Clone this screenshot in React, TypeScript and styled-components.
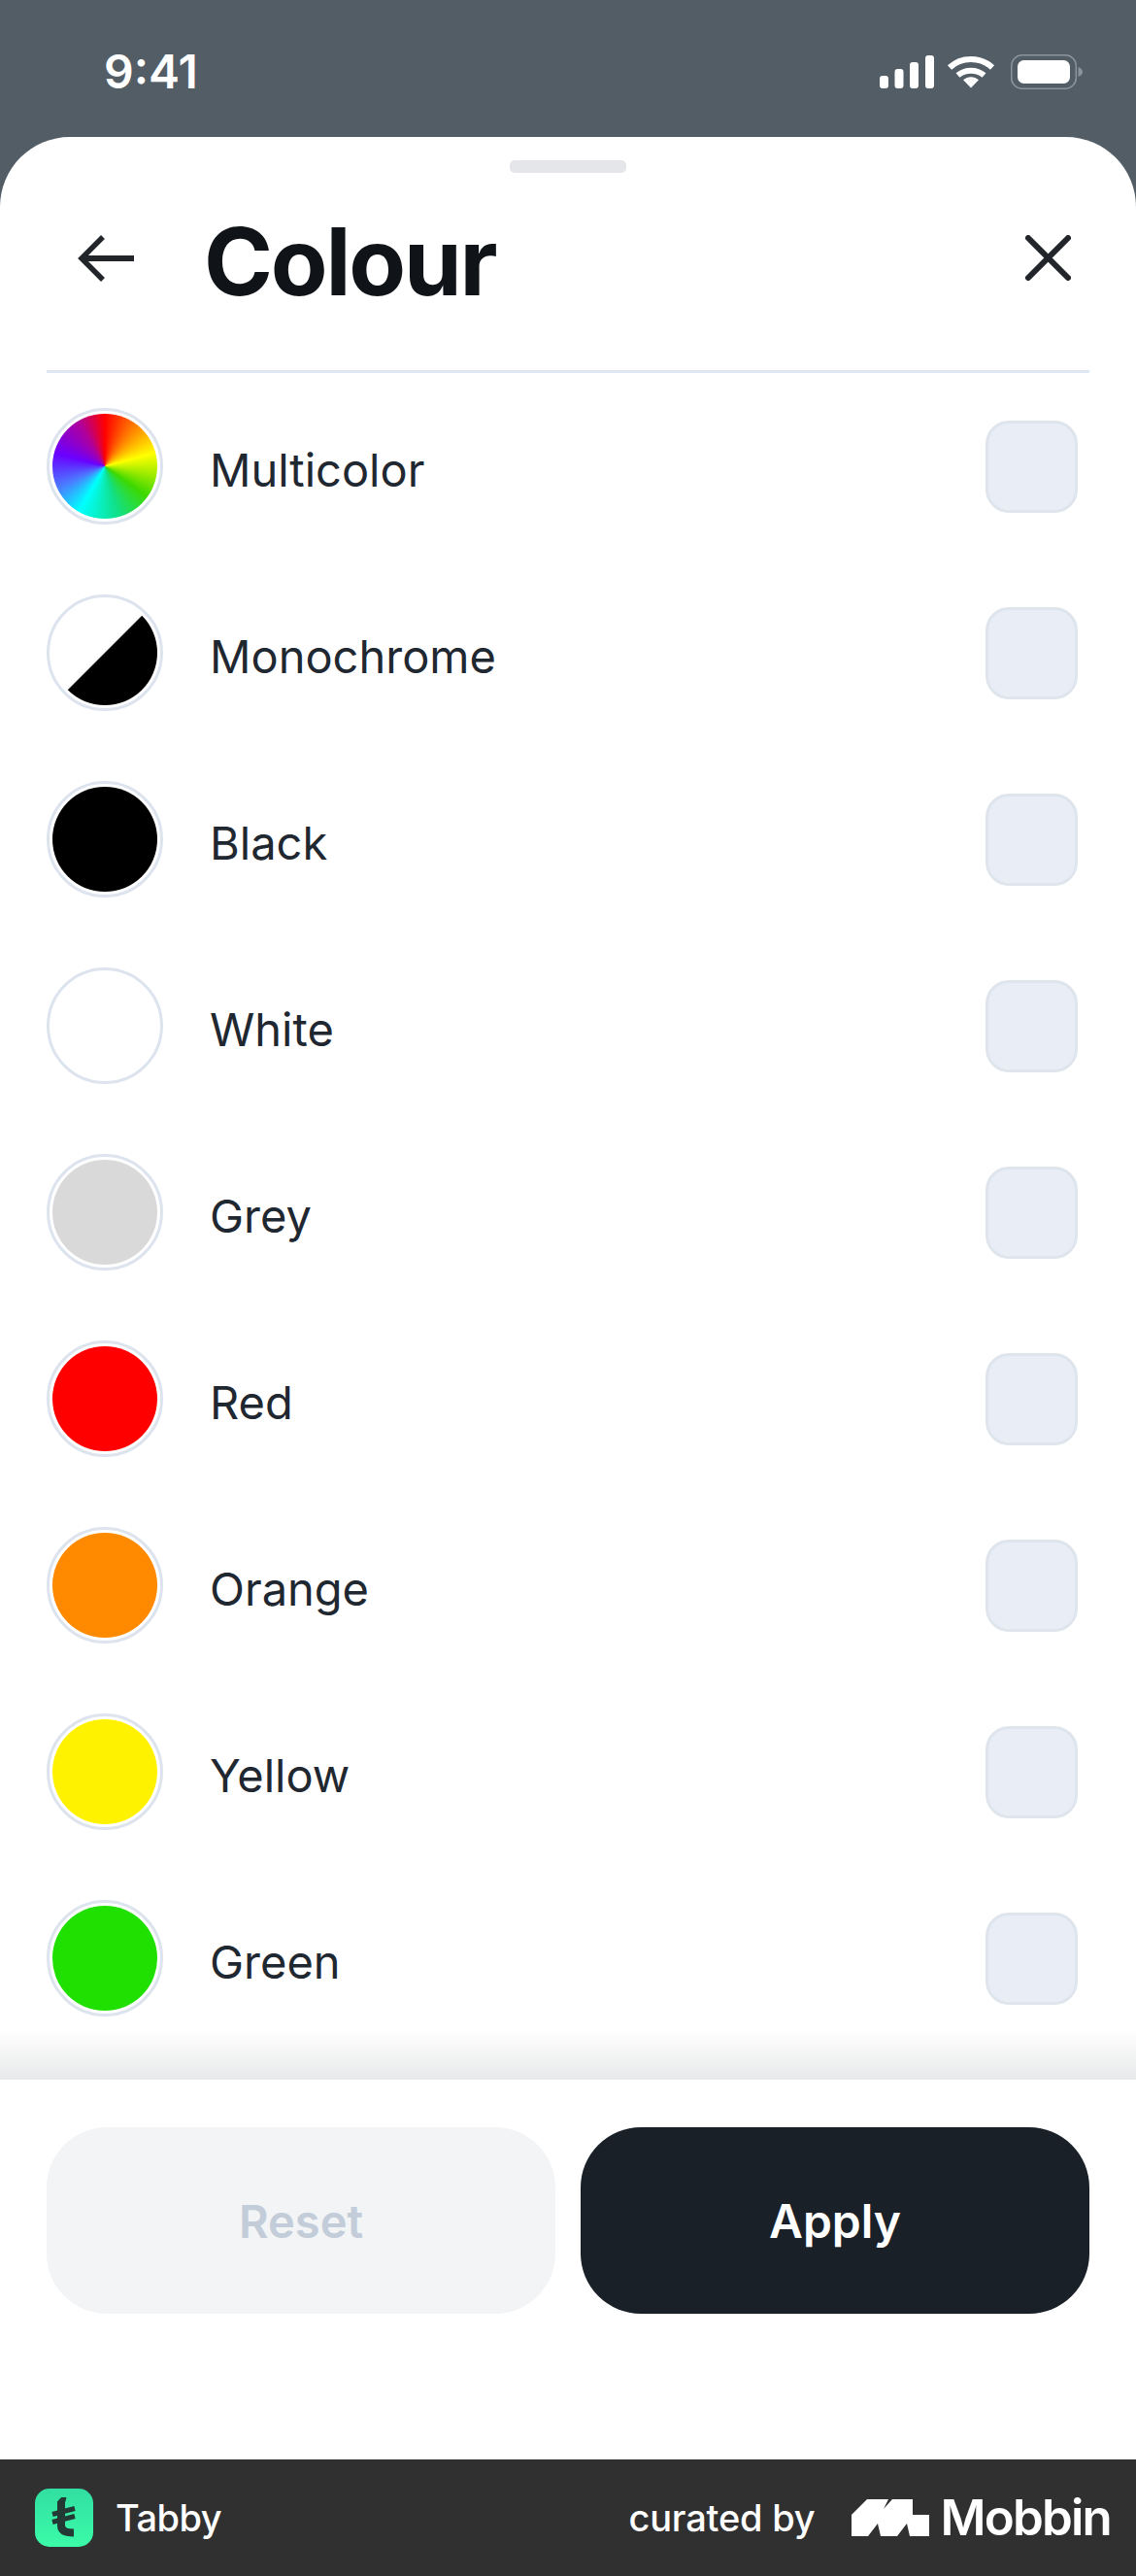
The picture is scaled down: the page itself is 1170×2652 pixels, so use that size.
import React from 'react';
import styled, { createGlobalStyle } from 'styled-components';

type ColourItem = { name: string; fill: string; plain?: boolean };

const colours: ColourItem[] = [
  {
    name: 'Multicolor',
    fill: 'conic-gradient(#ff0000 0deg, #ff7a00 35deg, #ffff00 75deg, #3ed800 125deg, #10e08a 165deg, #00ffff 210deg, #4a7dff 245deg, #6a00ff 285deg, #b0009a 330deg, #ff0000 360deg)',
  },
  { name: 'Monochrome', fill: 'linear-gradient(135deg, #ffffff 49.5%, #000000 50.5%)' },
  { name: 'Black', fill: '#000000' },
  { name: 'White', fill: '#ffffff', plain: true },
  { name: 'Grey', fill: '#d9d9d9' },
  { name: 'Red', fill: '#ff0000' },
  { name: 'Orange', fill: '#ff8a00' },
  { name: 'Yellow', fill: '#fff200' },
  { name: 'Green', fill: '#1fe000' },
];

export default function App() {
  return (
    <Page>
      <GlobalStyle />
      <StatusBar>
        <Time>9:41</Time>
        <StatusIcons>
          <svg width="56" height="34" viewBox="0 0 56 34" fill="#fff">
            <rect x="0" y="21" width="9" height="13" rx="3" />
            <rect x="15.5" y="14" width="9" height="20" rx="3" />
            <rect x="31" y="7" width="9" height="27" rx="3" />
            <rect x="47" y="0" width="9" height="34" rx="3" />
          </svg>
          <svg width="50" height="34" viewBox="0 0 50 34" fill="none" stroke="#fff" strokeWidth="6">
            <path d="M3 12.5C15 1 35 1 47 12.5" />
            <path d="M11.5 20.5C19 14 31 14 38.5 20.5" />
            <path d="M17 25.2L25 33.5L33 25.2C28 21.2 22 21.2 17 25.2Z" fill="#fff" stroke="none" />
          </svg>
          <svg width="74" height="36" viewBox="0 0 74 36" fill="none">
            <rect x="0.75" y="0.75" width="66.5" height="34.5" rx="11" stroke="#8b949c" strokeWidth="1.5" />
            <rect x="7" y="6" width="54" height="24" rx="6.5" fill="#fff" />
            <path d="M69.5 13C72.5 14 74 16 74 18C74 20 72.5 22 69.5 23Z" fill="#8b949c" />
          </svg>
        </StatusIcons>
      </StatusBar>

      <Sheet>
        <Handle />
        <Header>
          <BackIcon width="58" height="50" viewBox="0 0 58 50" fill="none" stroke="#22252a">
            <path d="M58 25H4" strokeWidth="6" />
            <path d="M26 3L4 25L26 47" strokeWidth="5.5" />
          </BackIcon>
          <Title>Colour</Title>
          <CloseIcon width="47" height="47" viewBox="0 0 47 47" fill="none" stroke="#22252a" strokeWidth="6" strokeLinecap="round">
            <path d="M3 3L44 44" />
            <path d="M44 3L3 44" />
          </CloseIcon>
        </Header>
        <Divider />

        <ListArea>
          {colours.map((colour) => (
            <Row key={colour.name}>
              <Swatch $fill={colour.fill} $plain={colour.plain} />
              <Label>{colour.name}</Label>
              <Checkbox />
            </Row>
          ))}
          <Shade />
        </ListArea>

        <Actions>
          <ResetButton>Reset</ResetButton>
          <ApplyButton>Apply</ApplyButton>
        </Actions>
      </Sheet>

      <CreditBar>
        <AppBrand>
          <svg width="60" height="60" viewBox="0 0 60 60">
            <defs>
              <linearGradient id="tabbyGreen" x1="0" y1="0" x2="0" y2="1">
                <stop offset="0" stopColor="#31dfa2" />
                <stop offset="1" stopColor="#3bfba8" />
              </linearGradient>
            </defs>
            <rect width="60" height="60" rx="15" fill="url(#tabbyGreen)" />
            <g fill="none" stroke="#223a33">
              <path d="M27 13V38C27 43 31 45.5 40 45.5" strokeWidth="8" />
              <path d="M23 14L27 9.5H32L30 16Z" fill="#223a33" strokeWidth="1" />
              <path d="M18 26.5L41 20.5" strokeWidth="5" />
              <path d="M18 34.5L41 28.5" strokeWidth="5" />
            </g>
          </svg>
          <AppName>Tabby</AppName>
        </AppBrand>
        <Curated>
          <CuratedText>curated by</CuratedText>
          <svg width="80" height="38" viewBox="0 0 80 38" fill="#fff">
            <path d="M0 16L16 0H38L33 10L42 0H63V16H80V38H60L57 25L47 38H30L27 25L17 38H0Z" />
          </svg>
          <MobbinName>Mobbin</MobbinName>
        </Curated>
      </CreditBar>
    </Page>
  );
}

const GlobalStyle = createGlobalStyle`
  html, body {
    margin: 0;
    padding: 0;
    background: #ffffff;
  }

  * {
    box-sizing: border-box;
  }
`;

const Page = styled.div`
  width: 1170px;
  height: 2652px;
  display: flex;
  flex-direction: column;
  background: #535d66;
  font-family: Inter, 'Liberation Sans', sans-serif;
  overflow: hidden;
`;

const StatusBar = styled.div`
  height: 141px;
  flex: none;
  display: flex;
  justify-content: space-between;
  align-items: flex-start;
  padding: 56px 55px 0 107px;
`;

const Time = styled.div`
  font-size: 48px;
  line-height: 36px;
  font-weight: 600;
  color: #ffffff;
`;

const StatusIcons = styled.div`
  display: flex;
  align-items: center;
  gap: 13px;

  svg + svg + svg {
    margin-left: 3px;
  }
`;

const Sheet = styled.div`
  flex: 1;
  min-height: 0;
  display: flex;
  flex-direction: column;
  background: #ffffff;
  border-radius: 72px 72px 0 0;
`;

const Handle = styled.div`
  width: 120px;
  height: 13px;
  margin: 24px auto 0;
  flex: none;
  border-radius: 5px;
  background: #e5e6e9;
`;

const Header = styled.div`
  height: 203px;
  flex: none;
  display: flex;
  align-items: center;
  padding: 0 67px 21px 80px;
`;

const BackIcon = styled.svg`
  flex: none;
  margin-top: -7px;
`;

const CloseIcon = styled.svg`
  flex: none;
  margin-top: -8px;
`;

const Title = styled.h1`
  flex: 1;
  margin: 0 0 0 72px;
  font-size: 96px;
  line-height: 110px;
  font-weight: 700;
  letter-spacing: -2.2px;
  color: #101318;
`;

const Divider = styled.div`
  height: 3px;
  flex: none;
  margin: 0 48px;
  background: #dfe7f0;
`;

const ListArea = styled.div`
  flex: 1;
  min-height: 0;
  position: relative;
  overflow: hidden;
`;

const Row = styled.div`
  height: 192px;
  display: flex;
  align-items: center;
  padding: 0 60px 0 48px;
`;

const Swatch = styled.div<{ $fill: string; $plain?: boolean }>`
  width: 120px;
  height: 120px;
  flex: none;
  padding: 3px;
  border: 3px solid #dee4ed;
  border-radius: 50%;
  background: ${(p) => p.$fill};
  background-clip: content-box;
  background-origin: content-box;
`;

const Label = styled.div`
  flex: 1;
  margin: 8px 0 0 48px;
  font-size: 47px;
  line-height: 60px;
  color: #1f2730;
`;

const Checkbox = styled.div`
  width: 95px;
  height: 95px;
  flex: none;
  border: 3px solid #dfe5ed;
  border-radius: 24px;
  background: #e9eef6;
`;

const Shade = styled.div`
  position: absolute;
  left: 0;
  right: 0;
  bottom: 0;
  height: 52px;
  background: linear-gradient(to bottom, rgba(232, 233, 234, 0), #e8e9ea);
`;

const Actions = styled.div`
  height: 391px;
  flex: none;
  display: grid;
  grid-template-columns: 524px 524px;
  gap: 26px;
  align-content: start;
  padding: 49px 48px 0;
`;

const ResetButton = styled.div`
  height: 192px;
  display: flex;
  align-items: center;
  justify-content: center;
  border-radius: 62px;
  background: #f2f4f6;
  font-size: 47px;
  font-weight: 600;
  color: #c3ccd9;
`;

const ApplyButton = styled(ResetButton)`
  background: #1a2028;
  color: #ffffff;
  font-size: 48px;
`;

const CreditBar = styled.div`
  height: 120px;
  flex: none;
  display: flex;
  justify-content: space-between;
  align-items: center;
  padding: 0 26px 0 36px;
  background: #303030;
  color: #ffffff;
`;

const AppBrand = styled.div`
  display: flex;
  align-items: center;
  gap: 23px;
`;

const AppName = styled.div`
  font-size: 38px;
  font-weight: 500;
  letter-spacing: -0.5px;
`;

const Curated = styled.div`
  display: flex;
  align-items: center;
`;

const CuratedText = styled.div`
  margin-right: 37px;
  font-size: 38px;
  font-weight: 500;
  letter-spacing: -0.2px;
`;

const MobbinName = styled.div`
  margin-left: 12px;
  font-size: 51px;
  line-height: 50px;
  font-weight: 600;
  letter-spacing: -1.8px;
`;
